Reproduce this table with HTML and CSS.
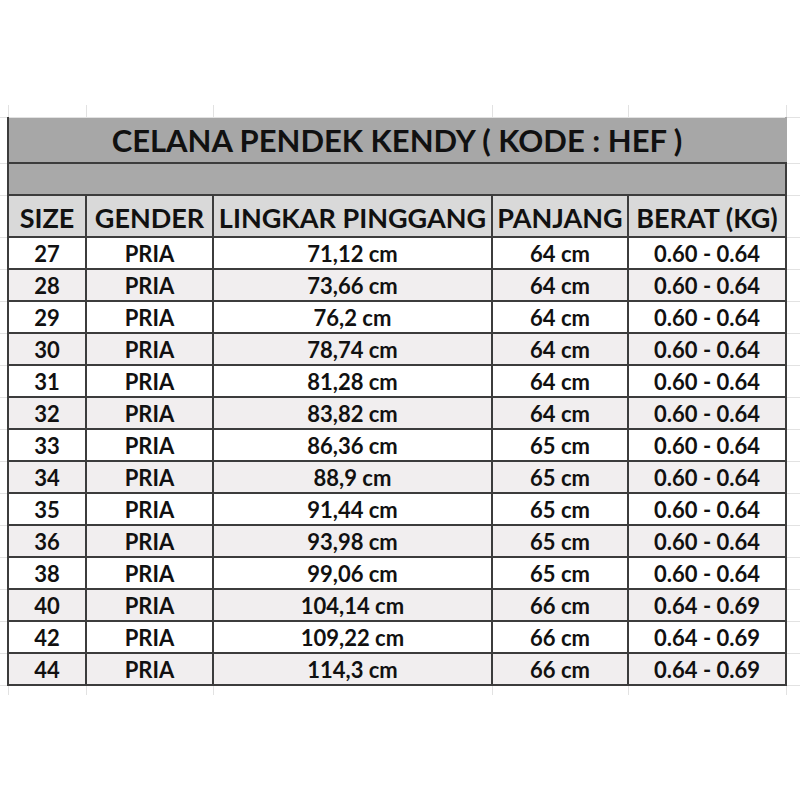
FILE: index.html
```html
<!DOCTYPE html>
<html>
<head>
<meta charset="utf-8">
<link rel="stylesheet" href="styles.css">
</head>
<body>
<div class="sheet">
<table class="grid">
  <colgroup>
    <col class="c-edge-l"><col class="c-size"><col class="c-gender"><col class="c-waist"><col class="c-len"><col class="c-weight"><col class="c-edge-r">
  </colgroup>
  <tr class="r-top"><td class="g"></td><td class="g"></td><td class="g"></td><td class="g"></td><td class="g"></td><td class="g"></td><td class="g"></td></tr>
  <tr class="r-title"><td class="g"></td><td class="title" colspan="5">CELANA PENDEK KENDY ( KODE : HEF )</td><td class="g"></td></tr>
  <tr class="r-band"><td class="g"></td><td class="band" colspan="5"></td><td class="g"></td></tr>
  <tr class="r-head"><td class="g"></td><th>SIZE</th><th>GENDER</th><th>LINGKAR PINGGANG</th><th>PANJANG</th><th>BERAT (KG)</th><td class="g"></td></tr>
  <tr class="r-data"><td class="g"></td><td>27</td><td>PRIA</td><td>71,12 cm</td><td>64 cm</td><td>0.60 - 0.64</td><td class="g"></td></tr>
  <tr class="r-data alt"><td class="g"></td><td>28</td><td>PRIA</td><td>73,66 cm</td><td>64 cm</td><td>0.60 - 0.64</td><td class="g"></td></tr>
  <tr class="r-data"><td class="g"></td><td>29</td><td>PRIA</td><td>76,2 cm</td><td>64 cm</td><td>0.60 - 0.64</td><td class="g"></td></tr>
  <tr class="r-data alt"><td class="g"></td><td>30</td><td>PRIA</td><td>78,74 cm</td><td>64 cm</td><td>0.60 - 0.64</td><td class="g"></td></tr>
  <tr class="r-data"><td class="g"></td><td>31</td><td>PRIA</td><td>81,28 cm</td><td>64 cm</td><td>0.60 - 0.64</td><td class="g"></td></tr>
  <tr class="r-data alt"><td class="g"></td><td>32</td><td>PRIA</td><td>83,82 cm</td><td>64 cm</td><td>0.60 - 0.64</td><td class="g"></td></tr>
  <tr class="r-data"><td class="g"></td><td>33</td><td>PRIA</td><td>86,36 cm</td><td>65 cm</td><td>0.60 - 0.64</td><td class="g"></td></tr>
  <tr class="r-data alt"><td class="g"></td><td>34</td><td>PRIA</td><td>88,9 cm</td><td>65 cm</td><td>0.60 - 0.64</td><td class="g"></td></tr>
  <tr class="r-data"><td class="g"></td><td>35</td><td>PRIA</td><td>91,44 cm</td><td>65 cm</td><td>0.60 - 0.64</td><td class="g"></td></tr>
  <tr class="r-data alt"><td class="g"></td><td>36</td><td>PRIA</td><td>93,98 cm</td><td>65 cm</td><td>0.60 - 0.64</td><td class="g"></td></tr>
  <tr class="r-data"><td class="g"></td><td>38</td><td>PRIA</td><td>99,06 cm</td><td>65 cm</td><td>0.60 - 0.64</td><td class="g"></td></tr>
  <tr class="r-data alt"><td class="g"></td><td>40</td><td>PRIA</td><td>104,14 cm</td><td>66 cm</td><td>0.64 - 0.69</td><td class="g"></td></tr>
  <tr class="r-data"><td class="g"></td><td>42</td><td>PRIA</td><td>109,22 cm</td><td>66 cm</td><td>0.64 - 0.69</td><td class="g"></td></tr>
  <tr class="r-data alt"><td class="g"></td><td>44</td><td>PRIA</td><td>114,3 cm</td><td>66 cm</td><td>0.64 - 0.69</td><td class="g"></td></tr>
  <tr class="r-bottom"><td class="g"></td><td class="g"></td><td class="g"></td><td class="g"></td><td class="g"></td><td class="g"></td><td class="g"></td></tr>
</table>
</div>
</body>
</html>
```

FILE: styles.css
```css
html, body {
  margin: 0;
  padding: 0;
  background: #ffffff;
}

.sheet {
  padding-top: 105px;
  width: 800px;
}

.grid {
  border-collapse: collapse;
  table-layout: fixed;
  width: 800px;
  font-family: Lato, "Liberation Sans", sans-serif;
  font-weight: 700;
  color: #111111;
}

.c-edge-l { width: 8px; }
.c-size { width: 78px; }
.c-gender { width: 127px; }
.c-waist { width: 279px; }
.c-len { width: 136px; }
.c-weight { width: 158px; }
.c-edge-r { width: 14px; }

.grid td, .grid th {
  padding: 0;
  text-align: center;
  white-space: nowrap;
  overflow: hidden;
  border: 2px solid #3c3c3c;
}

.grid td.g {
  border: 1px solid #e2e2e2;
  background: #ffffff;
}

.r-top td.g { border-top: none; }
.r-bottom td.g { border-bottom: none; }
.grid td.g:first-child { border-left: none; }
.grid td.g:last-child { border-right: none; }

.r-top { height: 12px; }
.r-bottom { height: 10px; }

.r-title { height: 46px; }
.title {
  background: #a7a7a7;
  font-size: 31px;
  padding-top: 5px;
  letter-spacing: 0;
}
.grid td.title { border-top: none; border-right-color: #a7a7a7; }

.r-band { height: 32px; }
.band { background: #a9a9a9; }

.r-head { height: 42px; }
.r-head th {
  background: #d9d9d9;
  font-size: 27px;
  font-weight: 700;
  padding-top: 2px;
}

.r-data { height: 32px; }
.r-data td {
  font-size: 22px;
  background: #ffffff;
  padding-top: 1px;
}
.r-data.alt td { background: #f1eeef; }
.r-data.alt td.g { background: #ffffff; }
```
